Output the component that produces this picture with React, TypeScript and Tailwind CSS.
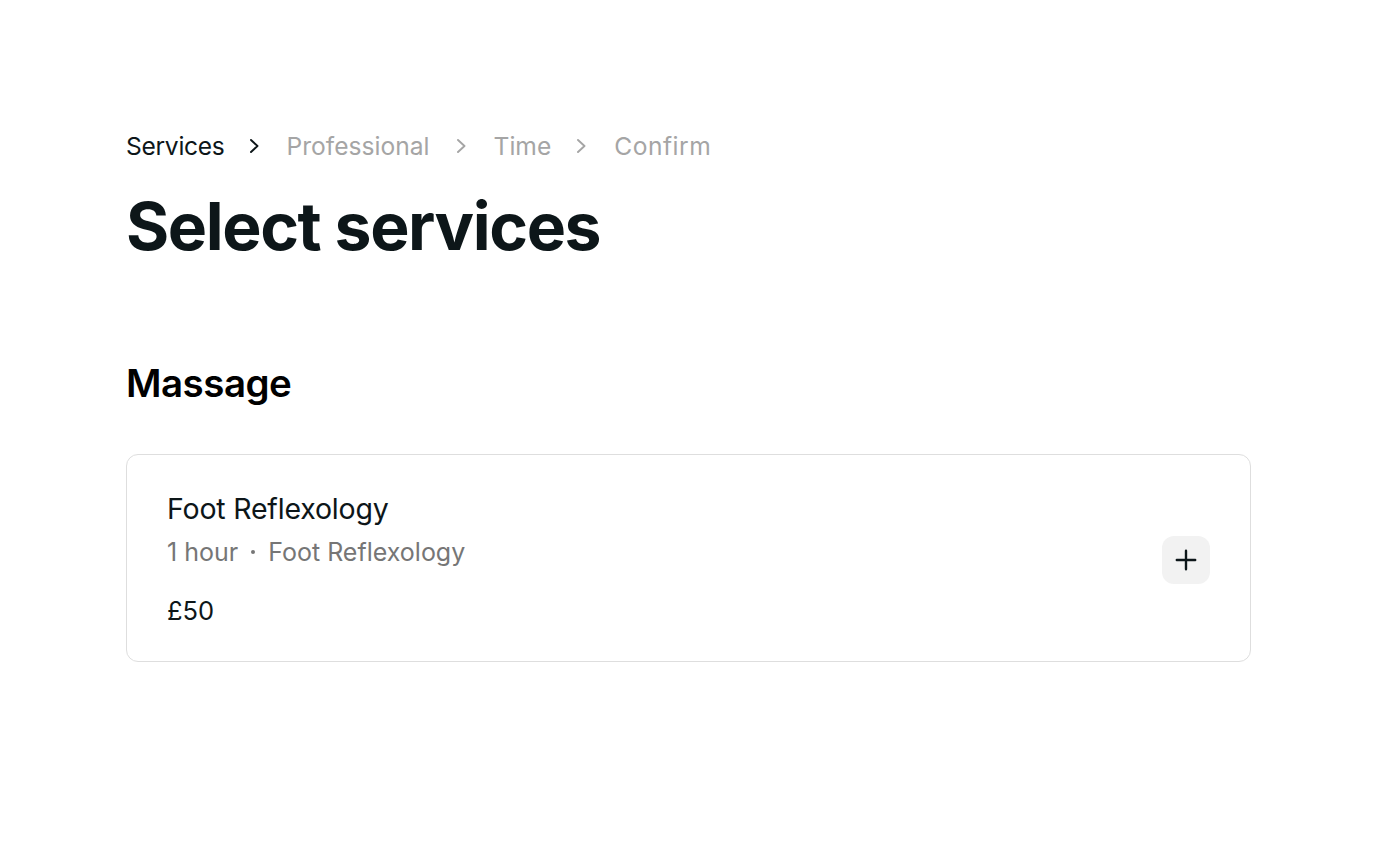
import React from "react";

function Chevron({ className }: { className?: string }) {
  return (
    <svg width="12" height="14" viewBox="0 0 12 14" fill="none" stroke="currentColor" strokeWidth="1.9" strokeLinecap="round" strokeLinejoin="round" className={className}>
      <path d="M3 1l6.5 6-6.5 6" />
    </svg>
  );
}

export default function App() {
  return (
    <div className="min-h-screen bg-white" style={{ fontFamily: "Inter, 'Noto Sans', sans-serif" }}>
      <div className="pl-[126px] pt-[128px] pr-[128px]">
        <nav className="flex items-center text-[24.6px] leading-[36px]">
          <span className="text-[#0d1619] tracking-[-0.3px]">Services</span>
          <Chevron className="ml-[23px] mr-[27px] text-[#0d1619]" />
          <span className="text-[#a5a5a5]">Professional</span>
          <Chevron className="ml-[25px] mr-[27px] text-[#a5a5a5]" />
          <span className="text-[#a5a5a5]">Time</span>
          <Chevron className="ml-[24px] mr-[27px] text-[#a5a5a5]" />
          <span className="text-[#a5a5a5] tracking-[0.5px]">Confirm</span>
        </nav>
        <h1 className="mt-[22px] text-[66px] leading-[80px] font-bold tracking-[-1.4px] text-[#0d1619]">Select services</h1>
        <h2 className="mt-[93px] text-[38.5px] leading-[48px] font-semibold tracking-[-0.5px] text-black">Massage</h2>
        <div className="mt-[47px] flex items-center rounded-[12px] border border-[#dedede] pl-[40px] pr-[40px] pt-[36px] pb-[33px]">
          <div className="flex-1">
            <div className="text-[28.5px] leading-[36px] text-[#0d1619] tracking-[-0.2px]">Foot Reflexology</div>
            <div className="mt-[8px] flex items-center text-[25px] leading-[34px] text-[#767676]">
              <span>1 hour</span>
              <span className="mx-[13px] inline-block h-[4px] w-[4px] rounded-full bg-[#767676]" />
              <span>Foot Reflexology</span>
            </div>
            <div className="mt-[25px] text-[25.5px] leading-[34px] text-[#0d1619]">£50</div>
          </div>
          <button className="flex h-[48px] w-[48px] items-center justify-center rounded-[12px] bg-[#f2f2f2] text-[#0d1619]">
            <svg width="26" height="26" viewBox="0 0 24 24" fill="none" stroke="currentColor" strokeWidth="2.2" strokeLinecap="round">
              <path d="M12 3.5v17M3.5 12h17" />
            </svg>
          </button>
        </div>
      </div>
    </div>
  );
}
